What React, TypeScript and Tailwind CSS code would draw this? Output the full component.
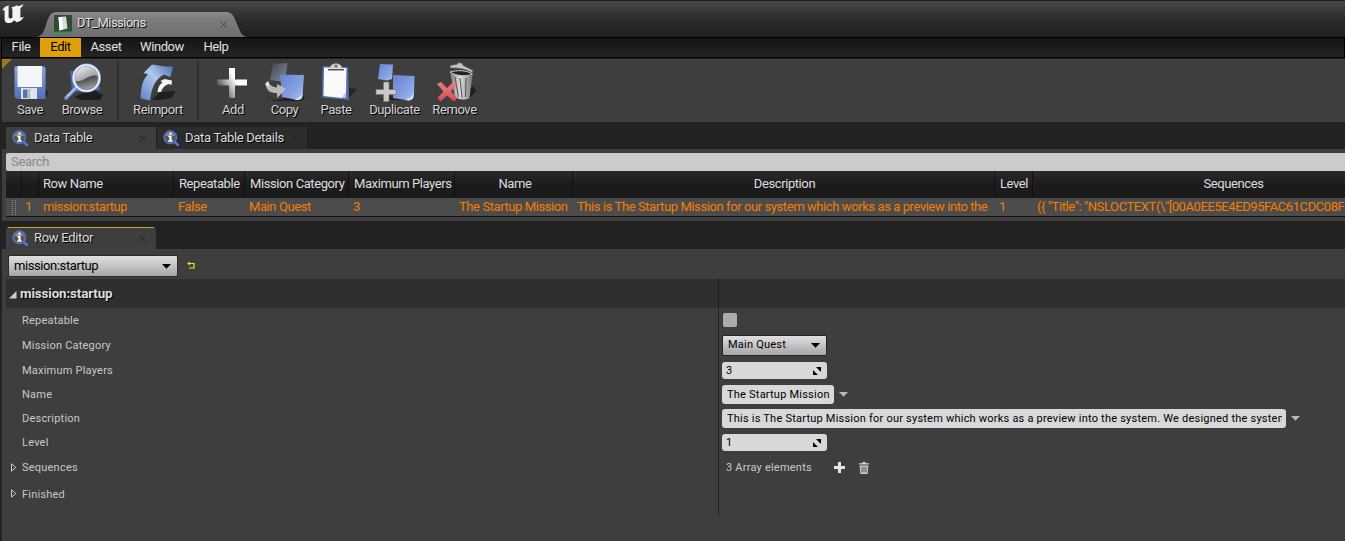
import React from "react";

const LABEL = "text-[13px] tracking-[-0.41px] whitespace-nowrap";
const TAB_LABEL = "text-[13px] tracking-[-0.3px] whitespace-nowrap";
const SHADOW = "[text-shadow:1px_1px_0_#000]";

function Logo() {
  return (
    <svg width="26" height="24" viewBox="0 0 26 24" className="block">
      <path
        d="M2 10.2C3 6.6 5.4 4.8 9.2 4.4L8.6 5.6V16C9 17.6 10.8 18 12.4 16.8V8.4C12.4 7.2 11.8 6.6 11 6.4C13.4 6.2 15.4 5 17.4 4V5.2C19.6 5 21.8 4.2 23.4 3C22.8 5 21.6 6.4 20.4 7.2V16.2C21.6 16.8 22.8 16.4 24 15.4C22.8 18.4 20.2 20.4 16.6 21.2L14.2 19.2C12.4 21.4 10 22.4 7.4 22C5.4 21.4 4.6 20 4.6 18.2V10C4.4 8.6 3 9 2 10.2Z"
        fill="#f4f4f4"
      />
    </svg>
  );
}

function AssetTab() {
  return (
    <div className="relative h-[25px] w-[210px]">
      <svg width="210" height="25" viewBox="0 0 210 25" className="absolute inset-0">
        <defs>
          <linearGradient id="tabg" x1="0" y1="0" x2="0" y2="1">
            <stop offset="0" stopColor="#8a8a8a" />
            <stop offset="0.3" stopColor="#7c7c7c" />
            <stop offset="1" stopColor="#6e6e6e" />
          </linearGradient>
        </defs>
        <path d="M0 25C5 24 7 19 9 13C12 3 14 0 20 0H189C195 0 197 4 200 12C203 20 205 24 210 25Z" fill="url(#tabg)" />
      </svg>
      <div className="relative flex h-full items-center pl-[17px]">
        <svg width="18" height="18" viewBox="0 0 18 18" className="-mt-px block shrink-0">
          <rect width="18" height="18" fill="#2f4a35" />
          <rect y="16.5" width="18" height="1.5" fill="#1ea01e" />
          <path d="M4.5 2L12 1.5L13.5 13.5L5.5 15.5Z" fill="#d9d9d9" />
          <path d="M4.5 2L8 2.5L9 14.5L5.5 15.5Z" fill="#fff" />
        </svg>
        <span className={`ml-[5px] -mt-[3px] text-[13px] tracking-[-0.52px] text-[#e0e0e0] ${SHADOW}`}>DT_Missions</span>
        <Close className="ml-auto mr-[20px] -mt-px" color="#444" />
      </div>
    </div>
  );
}

function Close({ className = "", color = "#252525" }: { className?: string; color?: string }) {
  return (
    <svg width="7" height="7" viewBox="0 0 7 7" className={`block shrink-0 ${className}`}>
      <path d="M.5 .5L6.5 6.5M6.5 .5L.5 6.5" stroke={color} strokeWidth="1" />
    </svg>
  );
}

function InfoIcon() {
  return (
    <svg width="17" height="17" viewBox="0 0 17 17" className="block shrink-0">
      <path d="M10.5 11L15 15" stroke="#4d7bdc" strokeWidth="2.4" strokeLinecap="round" />
      <circle cx="7.3" cy="7.3" r="6.2" fill="#555" stroke="#5077c4" strokeWidth="1.5" />
      <path d="M2.5 6A5 5 0 0 1 12 6Z" fill="#8a8a8a" />
      <path d="M6.4 2.6H8.6V4.6H6.4ZM5.4 5.8H8.6V10.4H9.8V11.8H5V10.4H6.4V7.2H5.4Z" fill="#fff" />
    </svg>
  );
}

const defs = (
  <svg width="0" height="0" className="absolute">
    <defs>
      <linearGradient id="blue" x1="0" y1="0" x2="1" y2="1">
        <stop offset="0" stopColor="#6584d0" />
        <stop offset="0.6" stopColor="#86a1e2" />
        <stop offset="1" stopColor="#a9c0f3" />
      </linearGradient>
      <linearGradient id="floppy" x1="0" y1="0" x2="0" y2="1">
        <stop offset="0" stopColor="#87a4de" />
        <stop offset="1" stopColor="#5270b5" />
      </linearGradient>
      <linearGradient id="lens" x1="0.2" y1="0" x2="0.7" y2="1">
        <stop offset="0" stopColor="#f4f4f4" />
        <stop offset="0.5" stopColor="#aaa" />
        <stop offset="1" stopColor="#777" />
      </linearGradient>
      <linearGradient id="lensdark" x1="0" y1="0" x2="0.4" y2="1">
        <stop offset="0" stopColor="#222" />
        <stop offset="1" stopColor="#999" />
      </linearGradient>
      <linearGradient id="arrow" x1="0" y1="1" x2="1" y2="0">
        <stop offset="0" stopColor="#5d82c2" />
        <stop offset="0.55" stopColor="#b0c8ef" />
        <stop offset="1" stopColor="#4a6cae" />
      </linearGradient>
      <linearGradient id="plus" gradientUnits="userSpaceOnUse" x1="5" y1="27" x2="22" y2="17">
        <stop offset="0" stopColor="#3e3e3e" />
        <stop offset="0.55" stopColor="#b0b0b0" />
        <stop offset="1" stopColor="#fff" />
      </linearGradient>
      <linearGradient id="grey" x1="0" y1="0" x2="1" y2="1">
        <stop offset="0" stopColor="#444750" />
        <stop offset="1" stopColor="#85889a" />
      </linearGradient>
      <linearGradient id="can" x1="0" y1="0" x2="1" y2="0">
        <stop offset="0" stopColor="#777" />
        <stop offset="0.45" stopColor="#e0e0e0" />
        <stop offset="1" stopColor="#777" />
      </linearGradient>
      <linearGradient id="red" x1="0" y1="0" x2="0" y2="1">
        <stop offset="0" stopColor="#e88080" />
        <stop offset="1" stopColor="#d24c50" />
      </linearGradient>
    </defs>
  </svg>
);

const icons: Record<string, React.ReactNode> = {
  Save: (
    <>
      <path d="M8 37L35 37L39 30L35 28Z" fill="#222" />
      <path d="M4.5 4.5H34L35.5 6V37H7L4.5 34.5Z" fill="url(#floppy)" />
      <path d="M7.5 4H32V25H7.5Z" fill="#f5f5f7" />
      <path d="M11 26H27V37H11Z" fill="#dfe3ea" />
      <path d="M13 27.5H17.5V36H13Z" fill="#5573b7" />
      <path d="M18.5 27H20V37H18.5Z" fill="#aaa" />
    </>
  ),
  Browse: (
    <>
      <path d="M12 35L30 27L41 33L38 38H20Z" fill="#1d1d1d" />
      <path d="M8 9L34 8L38 28L10 30Z" fill="#5068a8" />
      <path d="M15 25L4 36" stroke="#7997d8" strokeWidth="3.6" strokeLinecap="round" />
      <path d="M15 24L5 34.5" stroke="#b5c9f4" strokeWidth="1.4" />
      <circle cx="24.5" cy="16" r="13" fill="url(#lens)" stroke="#8fa9e2" strokeWidth="3" />
      <circle cx="24.5" cy="16" r="13" fill="none" stroke="#f2f6ff" strokeWidth="1.5" />
      <path d="M14 19C20 21 28 11 35.5 14C36 22 31 27 24.5 27C19 27 15 24 14 19Z" fill="url(#lensdark)" />
    </>
  ),
  Reimport: (
    <>
      <path d="M14 38L22 30L37 29L34 36L22 38Z" fill="#1f1f1f" />
      <path d="M2.5 36.5C3 24 5 17 10 12.5L5.5 11L14 2.5L27 4.5L35 4.5L32.5 15L26 12.5C17 17 13.5 26 12 38.5Z" fill="url(#arrow)" />
      <path d="M19.5 30C20 25 22 22 24.5 20.5L22.5 19L26.5 17L34 18.5L33.5 23L30.5 22C27 23.5 24 26 23 30Z" fill="#f6f6f6" />
    </>
  ),
  Add: <path d="M16 6H22V17.5H34V23.5H22V36H16V23.5H4V17.5H16Z" fill="url(#plus)" />,
  Copy: (
    <>
      <path d="M2 33C6 41 16 38 20 35L38 34L40 36L36 39H8Z" fill="#222" />
      <path d="M8 2L22.5 1L20 20L5 18Z" fill="url(#grey)" />
      <path d="M15 12.5L39 13L37.5 34C37 37 35 38 33 38L17 35Z" fill="url(#blue)" />
      <path d="M29 38C34 36 36 34 37.5 30L37 36L33 38Z" fill="#d5e1ff" />
      <path d="M1 21C1 29 5 31 12 31V36L21 27L12 22V25.5C8 25 5 24 3.5 20Z" fill="#b9b9b9" />
      <path d="M0 22L3 19L4.5 23L2 25Z" fill="#bff1f7" />
    </>
  ),
  Paste: (
    <>
      <path d="M31 38L41 27L33 26Z" fill="#242424" />
      <path d="M6.5 4L32 5L33 38L6 35.5Z" fill="#526fae" />
      <path d="M8 5.5L30.5 6L30 31L26 36L7.5 34Z" fill="#fafafa" />
      <path d="M26 36C27 33 28 32 30 31L30 36Z" fill="#b6c8ee" />
      <path d="M12 7.7H28" stroke="#555" strokeWidth="1.6" />
      <path d="M14 6.5C14 3 17 1.5 20 1.5C23 1.5 26 3 26 6.5Z" fill="#cfcfcf" />
      <circle cx="20" cy="4" r="1.5" fill="#666" />
    </>
  ),
  Duplicate: (
    <>
      <path d="M4 38L20 32L40 33L38 38Z" fill="#222" />
      <path d="M5 2L18 2.5L17 17L12 18.5L3 17Z" fill="url(#blue)" />
      <path d="M18 13L39.5 14L39 34C37 37 36 38 34 38.5L18 36Z" fill="url(#blue)" />
      <path d="M30 38C35 36 38 34 39 31L38 37L34 38.5Z" fill="#d5e1ff" />
      <path d="M8.5 20H14V27.5H21V32.5H14V39.5H8.5V32.5H1V27.5H8.5Z" fill="#c9c9c9" stroke="#777" strokeWidth=".6" />
    </>
  ),
  Remove: (
    <>
      <path d="M20 37L36 35L41 29L38 24Z" fill="#1f1f1f" />
      <path d="M15 10C22 14 30 15 37.5 13L34.5 36C29 39 23 37 20 35Z" fill="url(#can)" />
      <path d="M20 15L23.5 35M25 16L27 36M31 16L30.5 35" stroke="#555" strokeWidth="1.1" />
      <path d="M15 10C22 8 31 8 37.5 12C31 15 21 14 15 10Z" fill="#222" stroke="#ccc" />
      <path d="M15 3.5L22 2.5L23 .8L27 1.2L28 3.5L38 8.5L37 10.5C30 6.5 23 5.5 15.5 6Z" fill="#c5c5c5" stroke="#666" strokeWidth=".6" />
      <path d="M2 22L6 20L12 26L18 20L22 22L16 29.5L22.5 36L19 39.5L12 33.5L5.5 39.5L2.5 36L8.5 29.5Z" fill="url(#red)" />
    </>
  ),
};

function ToolButton({ name, className }: { name: string; className: string }) {
  return (
    <div className={`flex shrink-0 flex-col items-center pt-[3px] ${className}`}>
      <svg width="40" height="40" viewBox="0 0 40 40" className="block shrink-0 overflow-visible">
        {icons[name]}
      </svg>
      <span className={`leading-4 text-[#d4d4d4] ${LABEL} ${SHADOW}`}>{name}</span>
    </div>
  );
}

function PanelTab({ title, className, active }: { title: string; className: string; active?: boolean }) {
  return (
    <div className={`relative flex h-[22px] items-center pl-[6px] pr-[10px] ${className}`}>
      {active && <div className="absolute inset-x-[2px] top-0 h-px bg-[#c4a416]" />}
      <InfoIcon />
      <span className={`ml-[5px] text-[#dcdcdc] ${TAB_LABEL} ${SHADOW}`}>{title}</span>
      <Close className="ml-auto" />
    </div>
  );
}

const columns = [
  { w: "w-[16px]", head: "", cell: "", hp: "", cp: "" },
  { w: "w-[17px]", head: "", cell: "1", hp: "", cp: "pl-[3px]" },
  { w: "w-[135px]", head: "Row Name", cell: "mission:startup", hp: "pl-1", cp: "pl-1" },
  { w: "w-[71px]", head: "Repeatable", cell: "False", hp: "pl-[5px]", cp: "pl-1" },
  { w: "w-[104px]", head: "Mission Category", cell: "Main Quest", hp: "pl-[5px]", cp: "pl-1" },
  { w: "w-[106px]", head: "Maximum Players", cell: "3", hp: "pl-[5px]", cp: "pl-1" },
  { w: "w-[118px]", head: "Name", cell: "The Startup Mission", hp: "justify-center pl-[3px]", cp: "pl-1" },
  { w: "w-[422px]", head: "Description", cell: "This is The Startup Mission for our system which works as a preview into the s", hp: "justify-center pl-[2px]", cp: "pl-1" },
  { w: "w-[38px]", head: "Level", cell: "1", hp: "pl-[5px]", cp: "pl-1" },
  { w: "w-[402px]", head: "Sequences", cell: '({ "Title": "NSLOCTEXT(\\"[00A0EE5E4ED95FAC61CDC08F', hp: "justify-center", cp: "pl-1" },
];

function Caret({ className = "", color = "#000" }: { className?: string; color?: string }) {
  return (
    <svg width="9" height="5" viewBox="0 0 9 5" className={`block shrink-0 ${className}`}>
      <path d="M0 0H9L4.5 4.8Z" fill={color} />
    </svg>
  );
}

function Spin({ value }: { value: string }) {
  return (
    <div className="flex h-[17px] w-[105px] items-center justify-between rounded-[3px] bg-[#d8d8d8] pl-1 pr-[6px] text-black">
      <span className="pt-px">{value}</span>
      <svg width="8" height="8" viewBox="0 0 8 8" className="block">
        <path d="M3 0H8V5ZM0 3V8H5Z" fill="#000" />
      </svg>
    </div>
  );
}

function TextBox({ value, className }: { value: string; className: string }) {
  return (
    <>
      <div className={`flex h-[19px] items-center rounded-[3px] bg-[#d8d8d8] pl-[5px] pr-[4px] text-black ${className}`}>
        <span className="overflow-hidden pt-px">{value}</span>
      </div>
      <Caret className="ml-[5px]" color="#b8b8b8" />
    </>
  );
}

function Row({ label, height, expand, children }: { label: string; height: string; expand?: boolean; children?: React.ReactNode }) {
  return (
    <div className={`flex shrink-0 ${height}`}>
      <div className="flex w-[713px] shrink-0 items-center border-r border-[#232323] pl-1">
        <span className="w-3 shrink-0">
          {expand && (
            <svg width="7" height="10" viewBox="0 0 7 10" className="block">
              <path d="M1.5 .8V8.2L5.8 4.5Z" fill="none" stroke="#ccc" />
            </svg>
          )}
        </span>
        <span className="pt-[2px]">{label}</span>
      </div>
      <div className="flex min-w-0 items-center pl-[3px]">{children}</div>
    </div>
  );
}

export default function App() {
  return (
    <div className="flex h-[541px] w-[1345px] flex-col overflow-hidden bg-[#222] font-['Roboto',sans-serif]">
      {defs}
      <div className="flex h-[37px] shrink-0 border-t border-[#1c1c1c] bg-linear-to-b from-[#484848] via-[#2b2b2b] to-[#202020]">
        <div className="w-[37px]">
          <Logo />
        </div>
        <div className="pt-[11px]">
          <AssetTab />
        </div>
      </div>
      <div className={`ml-px flex h-[21px] shrink-0 border border-black bg-linear-to-b from-[#141414] to-[#242424] text-[#e0e0e0] ${LABEL}`}>
        <span className="flex w-[38px] items-center justify-center pb-[2px]">File</span>
        <span className="flex w-[41px] items-center justify-center bg-[#dfa00c] pb-[2px] text-black">Edit</span>
        <span className="flex w-[50px] items-center justify-center pb-[2px]">Asset</span>
        <span className="flex w-[62px] items-center justify-center pb-[2px]">Window</span>
        <span className="flex w-[46px] items-center justify-center pb-[2px]">Help</span>
      </div>
      <div className="relative ml-[2px] mt-px flex h-[63px] shrink-0 bg-[#3e3e3e] pl-[2px]">
        <svg width="10" height="10" viewBox="0 0 10 10" className="absolute left-0 top-0">
          <path d="M0 0H10L0 10Z" fill="#99791c" />
        </svg>
        <ToolButton name="Save" className="w-[52px]" />
        <ToolButton name="Browse" className="w-[52px]" />
        <div className="ml-[9px] mt-[2px] h-[59px] w-[2px] bg-[#2d2d2d]" />
        <ToolButton name="Reimport" className="w-[78px]" />
        <div className="mt-[2px] h-[59px] w-[2px] bg-[#2d2d2d]" />
        <ToolButton name="Add" className="w-[68px]" />
        <ToolButton name="Copy" className="w-[35px]" />
        <ToolButton name="Paste" className="w-[68px]" />
        <ToolButton name="Duplicate" className="w-[49px]" />
        <ToolButton name="Remove" className="w-[71px]" />
      </div>
      <div className="mt-[5px] flex shrink-0 gap-px pl-[6px]">
        <PanelTab title="Data Table" className="w-[150px] bg-[#3e3e3e]" />
        <PanelTab title="Data Table Details" className="w-[150px] bg-[#2c2c2c]" />
      </div>
      <div className="ml-[2px] h-[72px] shrink-0 overflow-hidden bg-[#3e3e3e] pl-1 pt-1">
        <div className={`flex h-[18px] items-center rounded-l-[2px] bg-[#cbcbcb] pl-[5px] text-[#8a8a8a] ${TAB_LABEL}`}>Search</div>
        <div className={`flex h-[27px] w-[1429px] bg-linear-to-b from-[#2b2b2b] via-[#1c1c1c] to-[#1a1a1a] text-[#dedede] ${LABEL}`}>
          {columns.map((c, i) => (
            <div key={i} className={`flex shrink-0 items-center border-r border-[#111] pb-[2px] ${c.w} ${c.hp}`}>
              {c.head}
            </div>
          ))}
        </div>
        <div className={`flex h-[19px] w-[1429px] border-b border-[#111] bg-[#4c4c4c] text-[#f57c00] ${LABEL}`}>
          {columns.map((c, i) => (
            <div key={i} className={`flex shrink-0 items-center pr-1 ${c.w} ${c.cp}`}>
              {i === 0 ? (
                <svg width="5" height="15" viewBox="0 0 5 15" className="ml-[6px] block shrink-0" shapeRendering="crispEdges">
                  <path d="M.5 0V15M3.5 0V15" stroke="#8c8c8c" strokeDasharray="1 1" />
                </svg>
              ) : (
                <span className="overflow-hidden">{c.cell}</span>
              )}
            </div>
          ))}
        </div>
      </div>
      <div className="mt-[6px] flex shrink-0 pl-[6px]">
        <PanelTab title="Row Editor" active className="w-[150px] rounded-t-[2px] bg-[#3e3e3e]" />
      </div>
      <div className="ml-[2px] flex flex-1 flex-col bg-[#3e3e3e] pl-1 pt-[6px]">
        <div className="flex shrink-0 items-center pl-[2px]">
          <div className={`flex h-[22px] w-[170px] items-center justify-between rounded-[2px] border border-[#2a2a2a] bg-linear-to-b from-[#e0e0e0] to-[#a6a6a6] pb-px pl-[5px] pr-[6px] text-black ${LABEL}`}>
            mission:startup
            <Caret className="mt-px" />
          </div>
          <svg width="8" height="8" viewBox="0 0 8 8" className="-mt-[2px] ml-[9px] block">
            <path d="M2 2.5H7V7H2" fill="none" stroke="#e6e619" strokeWidth="1.2" />
            <path d="M0 2.5L3 .5V4.5Z" fill="#e6e619" />
          </svg>
        </div>
        <div className="mt-[2px] flex h-[29px] shrink-0 bg-[#2f2f2f]">
          <div className="flex w-[713px] items-center border-r border-[#1c1c1c] pl-[3px]">
            <svg width="8" height="8" viewBox="0 0 8 8" className="mt-[2px] block">
              <path d="M7.5 0V7.5H0Z" fill="#ccc" />
            </svg>
            <span className={`ml-[3px] text-[13.33px] font-bold tracking-[-0.12px] text-[#dedede] ${SHADOW}`}>mission:startup</span>
          </div>
        </div>
        <div className="flex flex-col text-[11px] tracking-[0.22px] whitespace-nowrap text-[#c8c8c8]">
          <Row label="Repeatable" height="h-6">
            <div className="ml-px size-[14px] rounded-[2px] bg-[#acacac]" />
          </Row>
          <Row label="Mission Category" height="h-[26px]">
            <div className="flex h-[21px] w-[105px] items-center justify-between rounded-[2px] border border-[#262626] bg-linear-to-b from-[#e0e0e0] to-[#a6a6a6] pl-[5px] pr-[6px] text-black">
              <span className="pt-px">Main Quest</span>
              <Caret />
            </div>
          </Row>
          <Row label="Maximum Players" height="h-[25px]">
            <Spin value="3" />
          </Row>
          <Row label="Name" height="h-[23px]">
            <TextBox value="The Startup Mission" className="w-[112px]" />
          </Row>
          <Row label="Description" height="h-[25px]">
            <TextBox
              value="This is The Startup Mission for our system which works as a preview into the system. We designed the system"
              className="w-[564px]"
            />
          </Row>
          <Row label="Level" height="h-[23px]">
            <Spin value="1" />
          </Row>
          <Row label="Sequences" height="h-[27px]" expand>
            <span className="w-[112px] pl-1 pt-[2px]">3 Array elements</span>
            <svg width="11" height="11" viewBox="0 0 11 11" className="block">
              <path d="M4 0H7V4H11V7H7V11H4V7H0V4H4Z" fill="#e4e4e4" />
            </svg>
            <svg width="10" height="12" viewBox="0 0 10 12" className="ml-[14px] block">
              <path d="M0 1.2H3L3.5 0H6.5L7 1.2H10V2.6H0ZM.7 3.6H9.3L8.6 12H1.4Z" fill="#cfcfcf" />
              <path d="M3 4.8V10.5M5 4.8V10.5M7 4.8V10.5" stroke="#3e3e3e" strokeWidth=".9" />
            </svg>
          </Row>
          <Row label="Finished" height="h-[26px]" expand />
          <div className="h-[9px] w-[713px] border-r border-[#232323]" />
        </div>
      </div>
    </div>
  );
}
